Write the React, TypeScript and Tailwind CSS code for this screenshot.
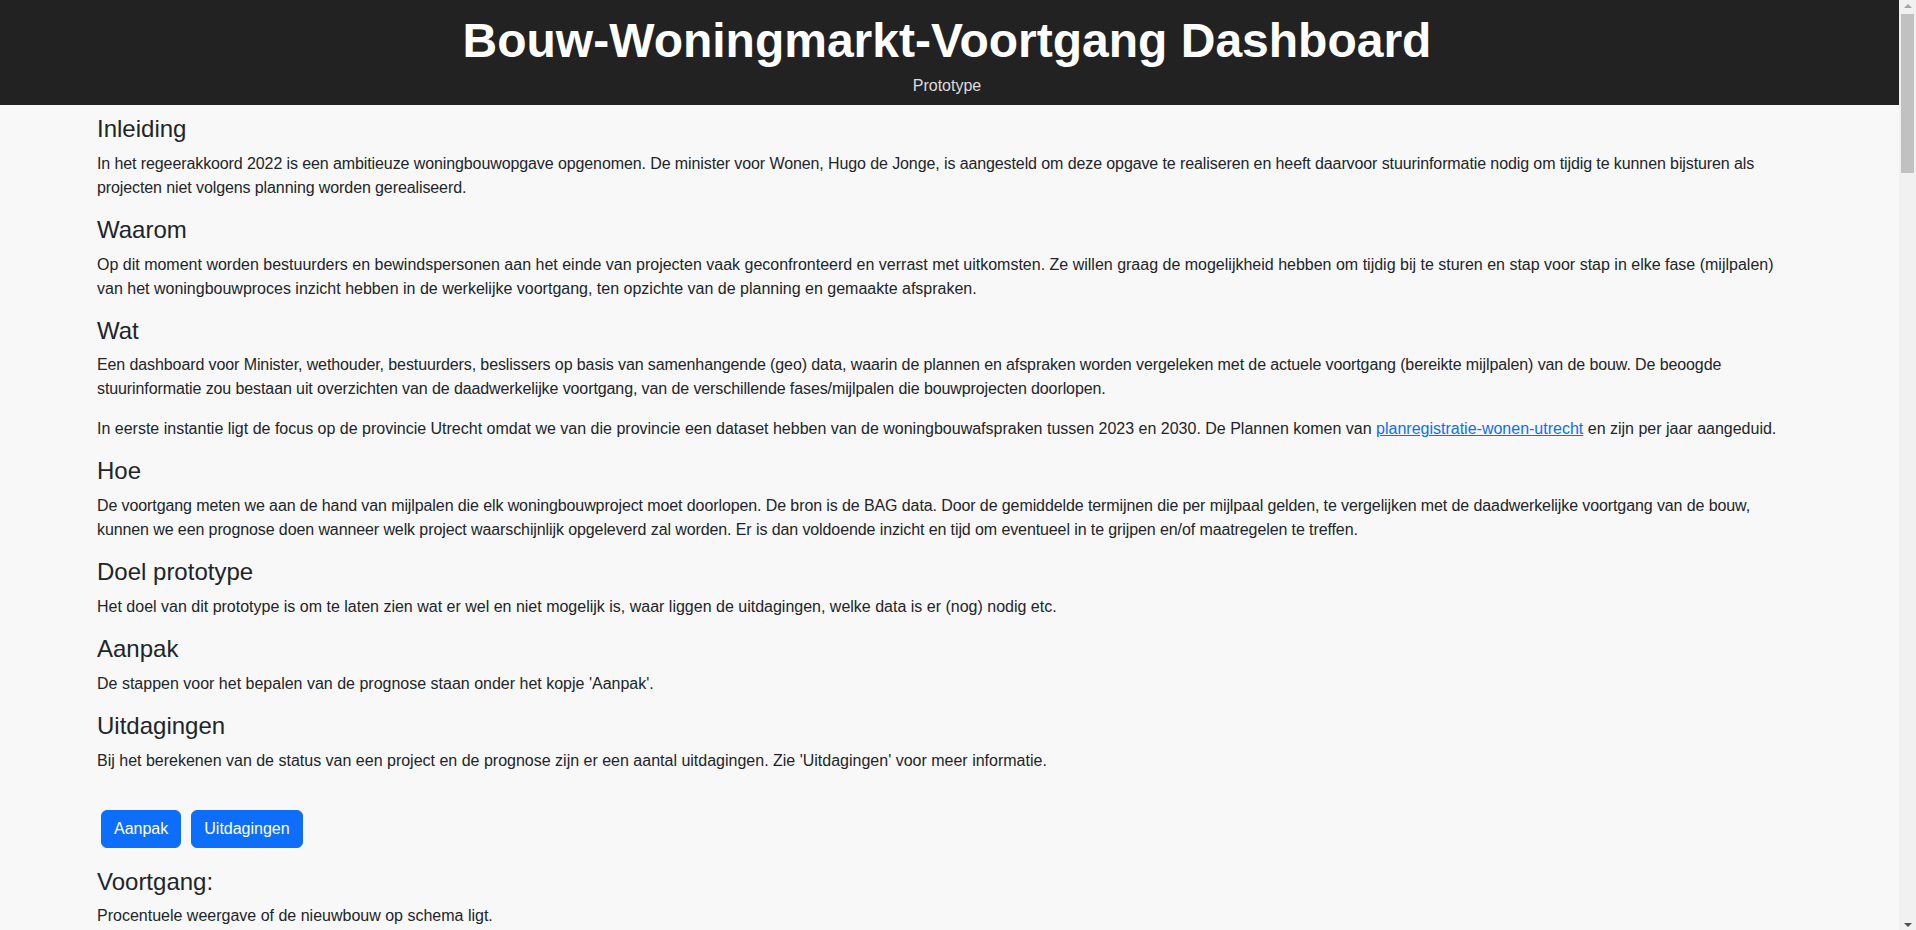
import React from 'react'

type Para = { text: React.ReactNode; tight?: boolean }

const sections: { title: string; paragraphs: Para[] }[] = [
  {
    title: 'Inleiding',
    paragraphs: [
      {
        tight: true,
        text: 'In het regeerakkoord 2022 is een ambitieuze woningbouwopgave opgenomen. De minister voor Wonen, Hugo de Jonge, is aangesteld om deze opgave te realiseren en heeft daarvoor stuurinformatie nodig om tijdig te kunnen bijsturen als projecten niet volgens planning worden gerealiseerd.',
      },
    ],
  },
  {
    title: 'Waarom',
    paragraphs: [
      {
        text: 'Op dit moment worden bestuurders en bewindspersonen aan het einde van projecten vaak geconfronteerd en verrast met uitkomsten. Ze willen graag de mogelijkheid hebben om tijdig bij te sturen en stap voor stap in elke fase (mijlpalen) van het woningbouwproces inzicht hebben in de werkelijke voortgang, ten opzichte van de planning en gemaakte afspraken.',
      },
    ],
  },
  {
    title: 'Wat',
    paragraphs: [
      {
        tight: true,
        text: 'Een dashboard voor Minister, wethouder, bestuurders, beslissers op basis van samenhangende (geo) data, waarin de plannen en afspraken worden vergeleken met de actuele voortgang (bereikte mijlpalen) van de bouw. De beoogde stuurinformatie zou bestaan uit overzichten van de daadwerkelijke voortgang, van de verschillende fases/mijlpalen die bouwprojecten doorlopen.',
      },
      {
        text: (
          <>
            In eerste instantie ligt de focus op de provincie Utrecht omdat we van die provincie een dataset hebben van de woningbouwafspraken tussen 2023 en 2030. De Plannen komen van{' '}
            <a href="#" className="text-[#0d6efd] underline">
              planregistratie-wonen-utrecht
            </a>{' '}
            en zijn per jaar aangeduid.
          </>
        ),
      },
    ],
  },
  {
    title: 'Hoe',
    paragraphs: [
      {
        tight: true,
        text: 'De voortgang meten we aan de hand van mijlpalen die elk woningbouwproject moet doorlopen. De bron is de BAG data. Door de gemiddelde termijnen die per mijlpaal gelden, te vergelijken met de daadwerkelijke voortgang van de bouw, kunnen we een prognose doen wanneer welk project waarschijnlijk opgeleverd zal worden. Er is dan voldoende inzicht en tijd om eventueel in te grijpen en/of maatregelen te treffen.',
      },
    ],
  },
  {
    title: 'Doel prototype',
    paragraphs: [
      {
        text: 'Het doel van dit prototype is om te laten zien wat er wel en niet mogelijk is, waar liggen de uitdagingen, welke data is er (nog) nodig etc.',
      },
    ],
  },
  {
    title: 'Aanpak',
    paragraphs: [{ text: "De stappen voor het bepalen van de prognose staan onder het kopje 'Aanpak'." }],
  },
  {
    title: 'Uitdagingen',
    paragraphs: [
      {
        text: "Bij het berekenen van de status van een project en de prognose zijn er een aantal uitdagingen. Zie 'Uitdagingen' voor meer informatie.",
      },
    ],
  },
]

// window scrollbar as it shows in the screenshot (page is long)
function Scrollbar() {
  return (
    <div className="fixed right-0 top-0 flex h-screen w-[17px] flex-col items-center bg-[#f1f1f1]">
      <div className="mt-1 h-0 w-0 border-x-[4px] border-b-[4px] border-x-transparent border-b-[#a3a3a3]" />
      <div className="mt-[6px] h-[159px] w-[13px] bg-[#c1c1c1]" />
      <div className="mt-auto mb-[3px] h-0 w-0 border-x-[4px] border-t-[4px] border-x-transparent border-t-[#505050]" />
    </div>
  )
}

export default function App() {
  return (
    <div className="min-h-[5240px] bg-[#f8f8f8] pr-[17px] text-[#212529] font-['Liberation_Sans',Arial,sans-serif] text-base leading-6">
      {/* Header */}
      <header className="h-[105px] bg-[#222222] pt-3 pr-[5px] text-center">
        <h1 className="mb-1 text-[48px] font-bold leading-[1.2] text-white">
          Bouw-Woningmarkt-Voortgang Dashboard
        </h1>
        <p className="text-base leading-6 text-[#dddddd]">Prototype</p>
      </header>

      <main className="pl-[97px] pr-[109px] pt-[10px]">
        {sections.map(s => (
          <section key={s.title}>
            <h4 className="mb-2 text-2xl font-medium leading-[1.2]">{s.title}</h4>
            {s.paragraphs.map((p, i) => (
              <p key={i} className={p.tight ? 'mb-4 tracking-[-0.1px]' : 'mb-4'}>
                {p.text}
              </p>
            ))}
          </section>
        ))}

        <div className="flex gap-[10px] pl-1 pt-[21px] pb-[20px]">
          <button className="h-[38px] rounded-md border border-[#0d6efd] bg-[#0d6efd] px-3 text-base text-white">
            Aanpak
          </button>
          <button className="h-[38px] rounded-md border border-[#0d6efd] bg-[#0d6efd] px-3 text-base text-white">
            Uitdagingen
          </button>
        </div>

        <h4 className="mb-2 text-2xl font-medium leading-[1.2]">Voortgang:</h4>
        <p className="mb-4">Procentuele weergave of de nieuwbouw op schema ligt.</p>
      </main>

      <Scrollbar />
    </div>
  )
}
